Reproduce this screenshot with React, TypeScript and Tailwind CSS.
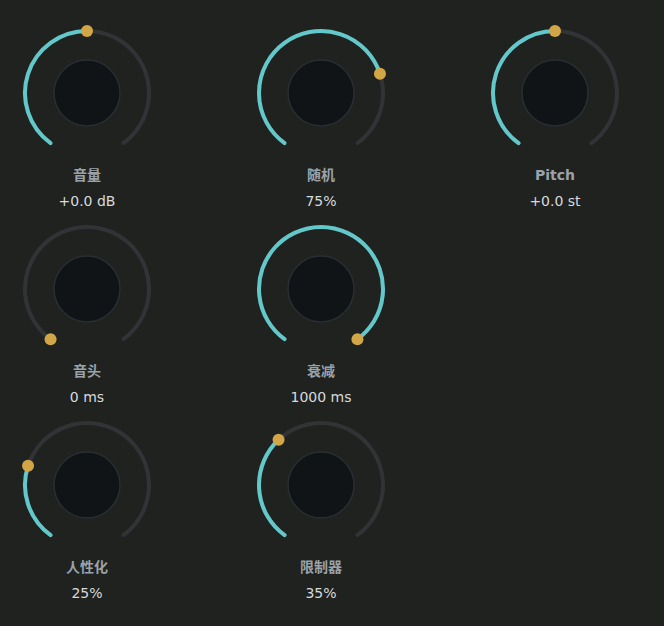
import React from 'react'

type KnobProps = {
  label: string
  display: string
  value: number // 0..1
}

const SWEEP = 144 // degrees either side of top
const R = 62
const CX = 75
const CY = 70

function polar(deg: number) {
  const rad = (deg * Math.PI) / 180
  return { x: CX + R * Math.sin(rad), y: CY - R * Math.cos(rad) }
}

function arcPath(from: number, to: number) {
  const a = polar(from)
  const b = polar(to)
  const large = to - from > 180 ? 1 : 0
  return `M ${a.x} ${a.y} A ${R} ${R} 0 ${large} 1 ${b.x} ${b.y}`
}

function Knob({ label, display, value }: KnobProps) {
  const end = -SWEEP + value * SWEEP * 2
  const dot = polar(end)
  return (
    <div className="flex flex-col items-center">
      <svg width="150" height="140" viewBox="0 0 150 140" className="block">
        <path d={arcPath(-SWEEP, SWEEP)} fill="none" stroke="#323336" strokeWidth="4" strokeLinecap="round" />
        {value > 0 && (
          <path d={arcPath(-SWEEP, end)} fill="none" stroke="#62c8ca" strokeWidth="4" strokeLinecap="round" />
        )}
        <circle cx={CX} cy={CY} r="33" fill="#111417" stroke="#292e33" strokeWidth="1.5" />
        <circle cx={dot.x} cy={dot.y} r="6" fill="#d2a547" />
      </svg>
      <div className="mt-[2px] text-[14px] leading-5 font-bold text-[#9aa2aa]">{label}</div>
      <div className="mt-[6px] text-[14px] leading-5 text-[#d6dadd]">{display}</div>
    </div>
  )
}

const knobs: (KnobProps | null)[] = [
  { label: '音量', display: '+0.0 dB', value: 0.5 },
  { label: '随机', display: '75%', value: 0.75 },
  { label: 'Pitch', display: '+0.0 st', value: 0.5 },
  { label: '音头', display: '0 ms', value: 0 },
  { label: '衰减', display: '1000 ms', value: 1 },
  null,
  { label: '人性化', display: '25%', value: 0.25 },
  { label: '限制器', display: '35%', value: 0.35 },
]

export default function App() {
  return (
    <div
      className="w-[664px] h-[626px] bg-[#202220] overflow-hidden pl-3 pt-[23px]"
      style={{ fontFamily: '"DejaVu Sans", "Noto Sans CJK SC", sans-serif' }}
    >
      <div className="grid grid-cols-[repeat(3,150px)] gap-x-[84px] gap-y-[8px]">
        {knobs.map((k, i) => (k ? <Knob key={i} {...k} /> : <div key={i} />))}
      </div>
    </div>
  )
}
